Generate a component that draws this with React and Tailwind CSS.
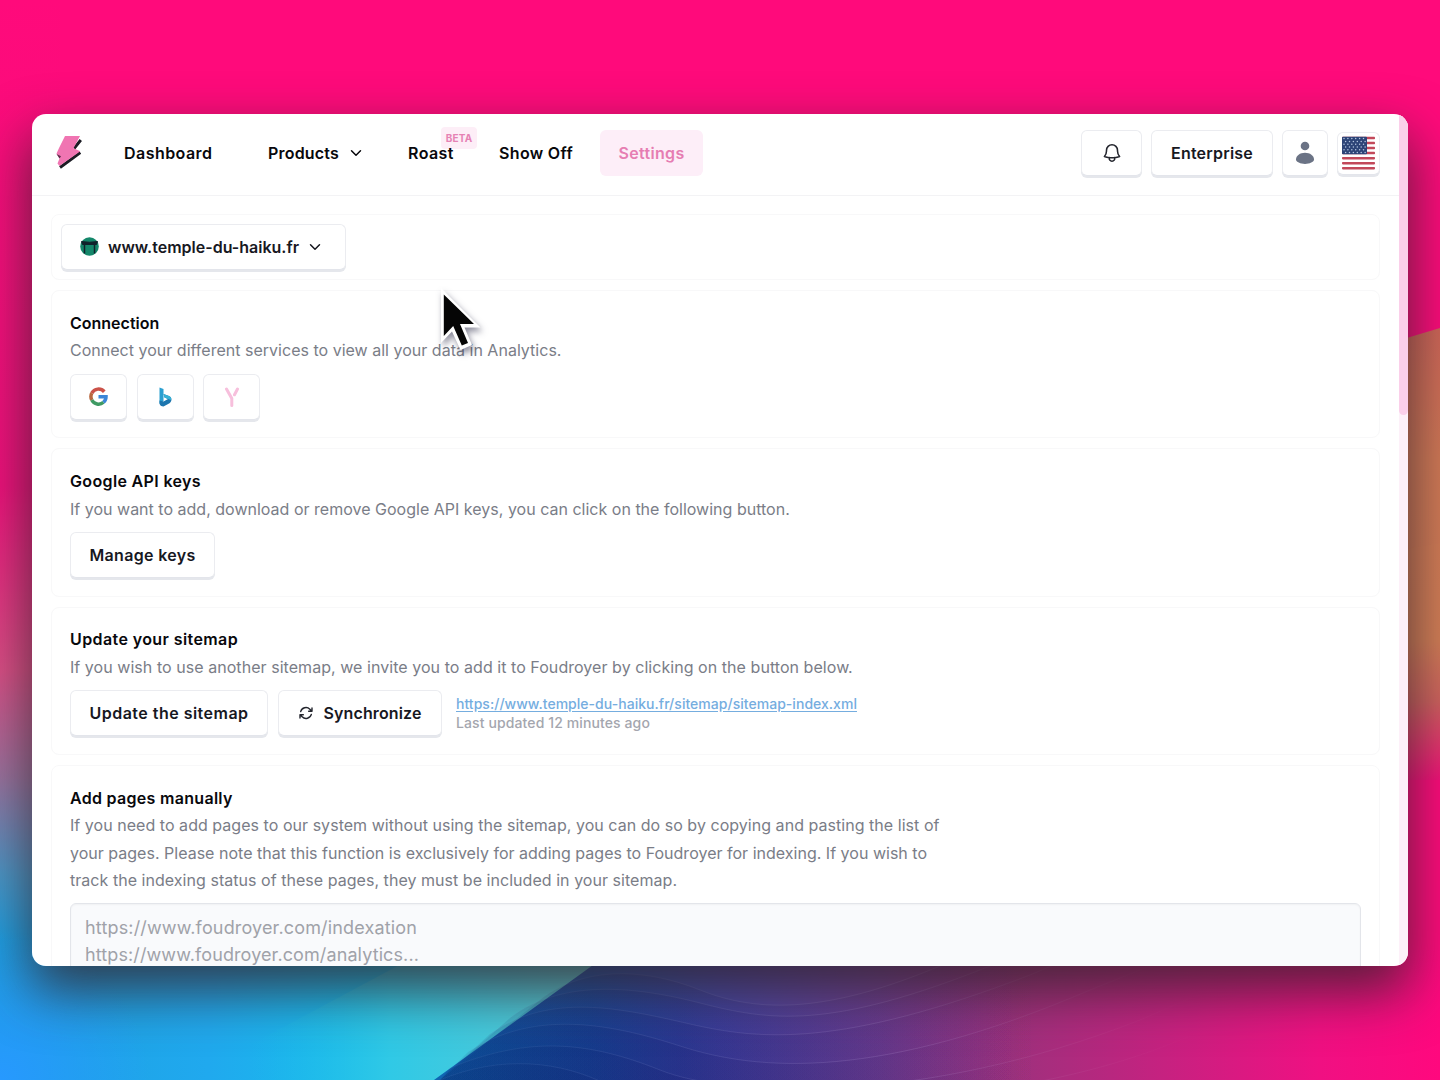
import { ChevronDown } from 'lucide-react';

const WAVES = [
  'M540 1000 C580 968 640 966 700 990 S830 1012 940 966 L1440 760',
  'M510 1018 C560 980 630 985 700 1003 S830 1030 990 966 L1440 780',
  'M490 1034 C550 992 620 1008 690 1024 S840 1048 1030 975 L1440 800',
  'M468 1052 C530 1012 600 1020 680 1046 S880 1080 1090 990 L1440 850',
  'M450 1068 C530 1035 590 1042 660 1070 S920 1106 1140 1020 L1440 890',
  'M440 1080 C500 1055 560 1060 610 1086 S980 1124 1180 1040 L1440 940',
];

function Wallpaper() {
  return (
    <svg className="absolute inset-0 h-full w-full" viewBox="0 0 1440 1080" preserveAspectRatio="none" aria-hidden="true">
      <defs>
        <linearGradient id="left" x1="0" y1="0" x2="0" y2="1">
          <stop offset="0" stopColor="#ff0a7b" />
          <stop offset="0.45" stopColor="#f0107c" />
          <stop offset="0.62" stopColor="#dc4f87" />
          <stop offset="0.72" stopColor="#9a74a0" />
          <stop offset="0.81" stopColor="#4a97c8" />
          <stop offset="0.87" stopColor="#1d9fe2" />
          <stop offset="1" stopColor="#259bfa" />
        </linearGradient>
        <linearGradient id="floor" x1="0" y1="0" x2="520" y2="0" gradientUnits="userSpaceOnUse">
          <stop offset="0" stopColor="#1d9fe2" />
          <stop offset="0.4" stopColor="#20a9ee" />
          <stop offset="0.75" stopColor="#17c2ec" />
          <stop offset="1" stopColor="#32c8f0" />
        </linearGradient>
        <radialGradient id="corner" cx="0" cy="1080" r="150" gradientUnits="userSpaceOnUse">
          <stop offset="0" stopColor="#2799ff" />
          <stop offset="1" stopColor="#2799ff" stopOpacity="0" />
        </radialGradient>
        <linearGradient id="facet" x1="250" y1="0" x2="600" y2="0" gradientUnits="userSpaceOnUse">
          <stop offset="0" stopColor="#1ab8ea" stopOpacity="0" />
          <stop offset="0.4" stopColor="#30c9e6" />
          <stop offset="1" stopColor="#5ccbd2" />
        </linearGradient>
        <linearGradient id="wave" x1="440" y1="0" x2="1440" y2="0" gradientUnits="userSpaceOnUse">
          <stop offset="0" stopColor="#0f66b2" />
          <stop offset="0.15" stopColor="#1c55aa" />
          <stop offset="0.28" stopColor="#4548a8" />
          <stop offset="0.44" stopColor="#703f94" />
          <stop offset="0.58" stopColor="#a0307d" />
          <stop offset="0.72" stopColor="#c52280" />
          <stop offset="0.88" stopColor="#f01082" />
          <stop offset="1" stopColor="#ff087e" />
        </linearGradient>
        <linearGradient id="right" x1="0" y1="320" x2="0" y2="780" gradientUnits="userSpaceOnUse">
          <stop offset="0" stopColor="#d06558" />
          <stop offset="0.3" stopColor="#d27a56" />
          <stop offset="0.7" stopColor="#d37e56" />
          <stop offset="0.83" stopColor="#d0625e" />
          <stop offset="1" stopColor="#f41079" />
        </linearGradient>
        <linearGradient id="crest" x1="440" y1="0" x2="1040" y2="0" gradientUnits="userSpaceOnUse">
          <stop offset="0" stopColor="#071d60" stopOpacity="0.1" />
          <stop offset="0.4" stopColor="#101060" stopOpacity="0.13" />
          <stop offset="1" stopColor="#301050" stopOpacity="0" />
        </linearGradient>
        <linearGradient id="rim" x1="440" y1="0" x2="1200" y2="0" gradientUnits="userSpaceOnUse">
          <stop offset="0.1" stopColor="#7fa0d8" stopOpacity="0.1" />
          <stop offset="0.6" stopColor="#b090d0" stopOpacity="0.22" />
          <stop offset="1" stopColor="#e080b0" stopOpacity="0" />
        </linearGradient>
      </defs>
      <rect width="1440" height="1080" fill="#ff0a7b" />
      <rect width="60" height="1080" fill="url(#left)" />
      <rect y="940" width="620" height="140" fill="url(#floor)" />
      <rect y="930" width="160" height="150" fill="url(#corner)" />
      <path d="M250 1045 L420 954 H620 L434 1080 H250Z" fill="url(#facet)" />
      <path d="M434 1080 L600 960 V950 H1440 V1080Z" fill="url(#wave)" />
      {WAVES.map((d) => (
        <g key={d}>
          <path d={d + 'V1080H440Z'} fill="url(#crest)" />
          <path d={d} fill="none" stroke="url(#rim)" />
        </g>
      ))}
      <path d="M1390 343 L1440 328 V780 H1390Z" fill="url(#right)" />
      <path d="M1390 552 L1440 543 V640 H1390Z" fill="#dd8a5a" fillOpacity="0.12" />
    </svg>
  );
}

function Logo() {
  return (
    <svg className="h-[36px] w-[28px] shrink-0" viewBox="0 0 28 36" aria-hidden="true">
      <path d="M25.800 5L19 13.500M25.300 17.500L5 32.500" fill="none" stroke="#1c1c24" strokeWidth="3" />
      <path d="M10 1H25L18.500 13.200L25.300 16.300L4.500 31L2.500 28.500L4.500 23.500L1.500 18.500L4.500 12Z" fill="#f075b2" />
      <path d="M1.500 19L6 21.300L4.500 23.500Z" fill="#5a2c48" />
    </svg>
  );
}

function Bell() {
  return (
    <svg className="h-[22px] w-[22px]" viewBox="0 0 24 24" fill="none" stroke="#24262e" strokeWidth="1.700" strokeLinecap="round" strokeLinejoin="round">
      <path d="M14.860 17.080a23.800 23.800 0 0 0 5.450-1.310A9 9 0 0 1 18 9.750V9A6 6 0 0 0 6 9v.750a9 9 0 0 1-2.310 6.020c1.730.640 3.560 1.090 5.450 1.310m5.720 0a24.300 24.300 0 0 1-5.720 0m5.720 0a3 3 0 1 1-5.720 0" />
    </svg>
  );
}

function User() {
  return (
    <svg className="h-6 w-5" viewBox="0 0 20 24" fill="#6b7385">
      <circle cx="10" cy="5" r="4.300" />
      <path d="M1 18.500c0-4 4-6.800 9-6.800s9 2.800 9 6.800c0 2.400-4.500 4.400-9 4.400S1 20.900 1 18.500Z" />
    </svg>
  );
}

function Flag() {
  return (
    <svg className="h-[34px] w-[33px]" viewBox="0 0 33 34">
      <rect y="0.500" width="33" height="33" rx="1.500" fill="#fff" />
      {[0, 1, 2, 3, 4, 5, 6].map((i) => (
        <rect key={i} y={0.8 + i * 5.02} width="33" height="2.500" rx="0.800" fill="#c2485a" />
      ))}
      <rect y="0.800" width="25" height="17.500" rx="1" fill="#2d4477" />
      {[0, 1, 2, 3, 4, 5].map((r) =>
        [0, 1, 2, 3, 4, 5].map((c) => (
          <circle key={r + '-' + c} cx={2 + c * 3.9 + (r % 2) * 1.6} cy={2.6 + r * 2.8} r="0.750" fill="#b5c6e0" />
        )),
      )}
    </svg>
  );
}

function Google() {
  return (
    <svg className="h-[19px] w-[19px]" viewBox="0 0 24 24" fill="none" strokeWidth="4.400">
      <path d="M19.300 6A9.600 9.600 0 0 0 3.500 7.700" stroke="#cb5249" />
      <path d="M3.500 7.700A9.600 9.600 0 0 0 3.500 16.400" stroke="#b9683f" />
      <path d="M3.500 16.400A9.600 9.600 0 0 0 18.300 19.300" stroke="#3f9a63" />
      <path d="M18.300 19.300A9.500 9.500 0 0 0 21.500 12.200H12" stroke="#3b86d8" />
    </svg>
  );
}

function Bing() {
  return (
    <svg className="h-5 w-[15px]" viewBox="0 0 15 20">
      <path d="M1.500 0.500L5.500 2V14L1.500 17Z" fill="#2b9fd0" />
      <path d="M1.500 13.500L5.500 14.500L10 12L6.500 10.500L5.500 7L11 9C14.500 10.500 14 14.500 11.500 16.300L5.500 19.500C3.500 19.500 1.500 18.500 1.500 16Z" fill="#1d76ae" />
      <path d="M5.500 7L11 9C13 9.800 13.500 11.500 13 13L10 12L6.500 10.500Z" fill="#35b2d5" />
    </svg>
  );
}

function Yandex() {
  return (
    <svg className="h-5 w-4" viewBox="0 0 16 20" fill="none" stroke="#f7bfdc" strokeWidth="3" strokeLinecap="round">
      <path d="M2.500 2L7.800 11.500V18.500" />
      <path d="M13.500 2L10.500 7.800" />
    </svg>
  );
}

function Sync() {
  return (
    <svg className="h-4 w-4" viewBox="0 0 24 24" fill="none" stroke="#24262e" strokeWidth="2.100" strokeLinecap="round" strokeLinejoin="round">
      <path d="M16 9.300h5V4.400M3 19.600v-5h5M3 14.600l3.200 3.200a8.250 8.250 0 0 0 13.800-3.700M4 9.900a8.250 8.250 0 0 1 13.800-3.700L21 9.300" />
    </svg>
  );
}

function Favicon() {
  return (
    <svg className="h-[19px] w-[19px]" viewBox="0 0 19 19">
      <circle cx="9.500" cy="9.500" r="9.300" fill="#14876a" />
      <path d="M1.500 4.500Q9.500 6 17.500 4.500L16.500 7.500H2.500Z" fill="#10222b" stroke="#10222b" strokeWidth="1" />
      <path d="M4.500 7V16.500M14.500 7V16.500" stroke="#10222b" strokeWidth="1.500" />
    </svg>
  );
}

function Pointer() {
  return (
    <svg className="absolute left-[403px] top-[168px] h-[76px] w-[52px] drop-shadow-[2px_4px_3px_rgba(30,30,60,0.5)]" viewBox="0 0 52 76">
      <path d="M6 6V61L17 49.500L25.500 68L37 63L29.500 45.500H45.500Z" fill="#fff" />
      <path d="M8.800 12.600V54L18.200 44L26.800 63.500L33 61L25 42H39Z" fill="#050505" />
    </svg>
  );
}

function Box({ className = '', children }) {
  return (
    <button className={'flex shrink-0 items-center justify-center rounded-md border border-[#ebecf0] border-b-[#e3e5eb] bg-white font-semibold text-[#17181f] shadow-[0_2px_0_#e5e7ec] ' + className}>
      {children}
    </button>
  );
}

function Card({ className = '', children }) {
  return <section className={'shrink-0 rounded-lg border border-[#f8f8f9] bg-white px-[18px] ' + className}>{children}</section>;
}

const title = 'text-base leading-[27.5px] font-semibold text-[#08080c]';
const desc = 'text-base leading-[27.5px] whitespace-nowrap text-[#7a7d87]';

export default function App() {
  return (
    <div className="relative h-[1080px] w-[1440px] overflow-hidden px-8 pt-[114px] font-['Inter',sans-serif] text-base">
      <Wallpaper />
      <div className="relative h-[852px] rounded-[14px] shadow-[0_24px_54px_2px_rgba(50,35,42,0.8)]">
        <main className="flex h-full overflow-hidden rounded-[14px] bg-white">
          <div className="flex min-w-0 flex-1 flex-col">
            <header className="flex h-[82px] shrink-0 items-center border-b border-[#f3f3f5] pb-[3px] pl-[23px] pr-[19px] font-semibold text-[#08080c]">
              <Logo />
              <nav className="flex items-center">
                <a className="ml-[41px] w-[88px] tracking-[0.45px]">Dashboard</a>
                <a className="ml-[56px] flex w-[94px] items-center justify-between tracking-[0.19px]">
                  Products
                  <ChevronDown className="-mr-[3px] h-[18px] w-[18px]" strokeWidth={2} />
                </a>
                <a className="relative ml-[46px] w-[46px] tracking-[0.4px]">
                  <span className="absolute -top-[14px] left-[33px] flex h-[22px] w-9 items-center justify-center rounded bg-[#fdeef7] text-[10px] font-bold tracking-[0.2px] text-[#e682b4]">BETA</span>
                  <span className="relative">Roast</span>
                </a>
                <a className="ml-[45px] w-[74px] whitespace-nowrap tracking-[0.34px]">Show Off</a>
                <a className="ml-[27px] flex h-[46px] w-[103px] items-center justify-center rounded-md bg-[#fdeef8] tracking-[0.32px] text-[#e67db2]">Settings</a>
              </nav>
              <div className="ml-auto flex items-center gap-[9px]">
                <Box className="h-[46px] w-[61px]"><Bell /></Box>
                <Box className="h-[46px] w-[122px] tracking-[0.21px]">Enterprise</Box>
                <Box className="h-[46px] w-[46px]"><User /></Box>
                <Box className="h-[43px] w-[43px]"><Flag /></Box>
              </div>
            </header>
            <div className="flex flex-1 flex-col gap-[10px] overflow-hidden pl-[19px] pr-[19px] pt-[18px]">
              <Card className="flex h-[66.3px] items-center !px-[9px]">
                <Box className="-mt-px h-[46px] w-[285px] !justify-start gap-[9px] pl-[18px] whitespace-nowrap">
                  <Favicon />
                  www.temple-du-haiku.fr
                  <ChevronDown className="-ml-[2px] h-[18px] w-[18px]" strokeWidth={2} />
                </Box>
              </Card>
              <Card className="h-[148.2px] pt-[18.7px]">
                <h2 className={title}>Connection</h2>
                <p className={desc + ' tracking-[0.014px]'}>Connect your different services to view all your data in Analytics.</p>
                <div className="mt-[8.8px] flex gap-[9.5px]">
                  <Box className="h-[46px] w-[57px]"><Google /></Box>
                  <Box className="h-[46px] w-[57px]"><Bing /></Box>
                  <Box className="h-[46px] w-[57px]"><Yandex /></Box>
                </div>
              </Card>
              <Card className="h-[148.2px] pt-[18.7px]">
                <h2 className={title + ' tracking-[0.35px]'}>Google API keys</h2>
                <p className={desc + ' tracking-[0.01px]'}>If you want to add, download or remove Google API keys, you can click on the following button.</p>
                <div className="mt-[8.8px] flex">
                  <Box className="h-[46px] w-[145px] tracking-[0.32px]">Manage keys</Box>
                </div>
              </Card>
              <Card className="h-[148.2px] pt-[18.7px]">
                <h2 className={title + ' tracking-[0.4px]'}>Update your sitemap</h2>
                <p className={desc + ' tracking-[0.05px]'}>If you wish to use another sitemap, we invite you to add it to Foudroyer by clicking on the button below.</p>
                <div className="mt-[8.8px] flex gap-[9.5px]">
                  <Box className="h-[46px] w-[198px] tracking-[0.48px]">Update the sitemap</Box>
                  <Box className="h-[46px] w-[164px] gap-[10px] tracking-[0.12px]"><Sync />Synchronize</Box>
                  <div className="ml-[5px] mt-[5px] text-sm leading-[18.5px] font-medium whitespace-nowrap">
                    <a className="block tracking-[0.03px] text-[#75addf] underline underline-offset-2">https://www.temple-du-haiku.fr/sitemap/sitemap-index.xml</a>
                    <p className="tracking-[0.11px] text-[#a4a6ae]">Last updated 12 minutes ago</p>
                  </div>
                </div>
              </Card>
              <Card className="h-[300px] pt-[18.7px]">
                <h2 className={title + ' tracking-[0.3px]'}>Add pages manually</h2>
                <p className={desc + ' tracking-[0.039px]'}>
                  If you need to add pages to our system without using the sitemap, you can do so by copying and pasting the list of<br />
                  <span className="tracking-[0.013px]">your pages. Please note that this function is exclusively for adding pages to Foudroyer for indexing. If you wish to</span><br />
                  track the indexing status of these pages, they must be included in your sitemap.
                </p>
                <div className="mt-[8.8px] h-[180px] rounded-md border border-[#e3e5ea] bg-[#f9fafc] px-[14px] pt-[9.5px] text-lg leading-[27.5px] text-[#a0a2a9] shadow-[inset_0_1px_2px_rgba(0,0,0,0.04)]">
                  <p className="tracking-[0.157px]">https://www.foudroyer.com/indexation</p>
                  <p className="tracking-[0.107px]">https://www.foudroyer.com/analytics...</p>
                </div>
              </Card>
            </div>
          </div>
          <div className="w-[9px] shrink-0 bg-[#fdf0f9]">
            <div className="h-[301px] rounded-b-full bg-[#fbcfea]" />
          </div>
        </main>
        <Pointer />
      </div>
    </div>
  );
}
